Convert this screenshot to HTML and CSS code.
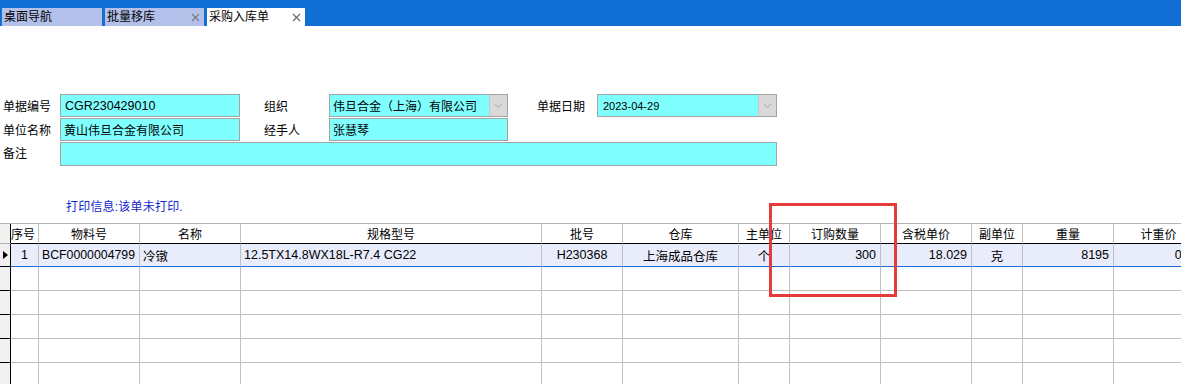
FILE: index.html
```html
<!DOCTYPE html>
<html lang="zh-CN">
<head>
<meta charset="utf-8">
<title>采购入库单</title>
<link rel="stylesheet" href="styles.css">
</head>
<body>
<div class="page">
  <div class="tabbar">
    <div class="tab">桌面导航</div>
    <div class="tab">批量移库<svg class="x" width="9" height="9" viewBox="0 0 9 9"><path d="M1 1L8 8M8 1L1 8" stroke="#7a7a7a" stroke-width="1.1" fill="none"/></svg></div>
    <div class="tab active">采购入库单<svg class="x" width="9" height="9" viewBox="0 0 9 9"><path d="M1 1L8 8M8 1L1 8" stroke="#666" stroke-width="1.1" fill="none"/></svg></div>
  </div>

  <div class="form">
    <div class="lbl">单据编号</div>
    <div class="inp lat">CGR230429010</div>
    <div class="lbl l2">组织</div>
    <div class="inp sel">伟旦合金（上海）有限公司<span class="dd"><svg width="9" height="6" viewBox="0 0 9 6"><path d="M1 1L4.5 4.5L8 1" stroke="#b8b8b8" stroke-width="1.2" fill="none"/></svg></span></div>
    <div class="lbl l3">单据日期</div>
    <div class="inp sel date">2023-04-29<span class="dd"><svg width="9" height="6" viewBox="0 0 9 6"><path d="M1 1L4.5 4.5L8 1" stroke="#b8b8b8" stroke-width="1.2" fill="none"/></svg></span></div>

    <div class="lbl">单位名称</div>
    <div class="inp">黄山伟旦合金有限公司</div>
    <div class="lbl l2">经手人</div>
    <div class="inp">张慧琴</div>
    <div class="blank"></div>
    <div class="blank"></div>

    <div class="lbl note">备注</div>
    <div class="inp wide"></div>
  </div>

  <div class="print">打印信息:该单未打印.</div>

  <div class="grid">
    <div class="row head">
      <div class="c ind"></div>
      <div class="c">序号</div>
      <div class="c">物料号</div>
      <div class="c">名称</div>
      <div class="c">规格型号</div>
      <div class="c">批号</div>
      <div class="c">仓库</div>
      <div class="c">主单位</div>
      <div class="c">订购数量</div>
      <div class="c">含税单价</div>
      <div class="c">副单位</div>
      <div class="c">重量</div>
      <div class="c">计重价</div>
    </div>
    <div class="row data sel-row">
      <div class="c ind"><svg width="6" height="8" viewBox="0 0 6 8"><path d="M1 0L6 4L1 8Z" fill="#000"/></svg></div>
      <div class="c ctr">1</div>
      <div class="c">BCF0000004799</div>
      <div class="c">冷镦</div>
      <div class="c">12.5TX14.8WX18L-R7.4 CG22</div>
      <div class="c ctr">H230368</div>
      <div class="c ctr">上海成品仓库</div>
      <div class="c ctr">个</div>
      <div class="c num">300</div>
      <div class="c num">18.029</div>
      <div class="c ctr">克</div>
      <div class="c num">8195</div>
      <div class="c num">0.00</div>
    </div>
    <div class="row empty">
      <div class="c ind"></div><div class="c"></div><div class="c"></div><div class="c"></div><div class="c"></div><div class="c"></div><div class="c"></div><div class="c"></div><div class="c"></div><div class="c"></div><div class="c"></div><div class="c"></div><div class="c"></div>
    </div>
    <div class="row empty">
      <div class="c ind"></div><div class="c"></div><div class="c"></div><div class="c"></div><div class="c"></div><div class="c"></div><div class="c"></div><div class="c"></div><div class="c"></div><div class="c"></div><div class="c"></div><div class="c"></div><div class="c"></div>
    </div>
    <div class="row empty">
      <div class="c ind"></div><div class="c"></div><div class="c"></div><div class="c"></div><div class="c"></div><div class="c"></div><div class="c"></div><div class="c"></div><div class="c"></div><div class="c"></div><div class="c"></div><div class="c"></div><div class="c"></div>
    </div>
    <div class="row empty">
      <div class="c ind"></div><div class="c"></div><div class="c"></div><div class="c"></div><div class="c"></div><div class="c"></div><div class="c"></div><div class="c"></div><div class="c"></div><div class="c"></div><div class="c"></div><div class="c"></div><div class="c"></div>
    </div>
    <div class="row empty">
      <div class="c ind"></div><div class="c"></div><div class="c"></div><div class="c"></div><div class="c"></div><div class="c"></div><div class="c"></div><div class="c"></div><div class="c"></div><div class="c"></div><div class="c"></div><div class="c"></div><div class="c"></div>
    </div>
  </div>

  <div class="mark"></div>
</div>
</body>
</html>
```

FILE: styles.css
```css
* { box-sizing: border-box; }
html, body { margin: 0; padding: 0; background: #fff; }
body {
  width: 1181px;
  height: 384px;
  overflow: hidden;
  font-family: "Liberation Sans", "Noto Sans CJK SC", sans-serif;
  font-size: 12px;
  color: #000;
}
.page { position: relative; width: 1181px; height: 384px; overflow: hidden; }

/* tabs */
.tabbar {
  height: 26px;
  background: #126fd6;
  padding: 8px 0 0 2px;
  display: flex;
  gap: 3px;
}
.tab {
  width: 99px;
  height: 18px;
  background: #b3c0ea;
  display: flex;
  align-items: center;
  justify-content: space-between;
  padding: 0 4px 0 2px;
  font-size: 12px;
  line-height: 18px;
}
.tab:first-child { width: 100px; }
.tab.active { background: #fff; width: 98px; }
.tab .x { display: block; }

/* form */
.form {
  padding-top: 68px;
  display: grid;
  grid-template-columns: 60px 180px 89px 179px 89px 180px;
  grid-template-rows: 23px 23px 24px;
  row-gap: 1px;
  width: 777px;
}
.lbl {
  padding-left: 3px;
  display: flex;
  align-items: center;
  font-size: 12px;
}
.lbl.l2 { padding-left: 24px; }
.lbl.l3 { padding-left: 29px; }
.lbl.note { align-items: flex-start; padding-top: 2px; }
.inp {
  background: #80ffff;
  border: 1px solid #a3a3a3;
  display: flex;
  align-items: center;
  padding-left: 3px;
  font-size: 12px;
  white-space: nowrap;
  overflow: hidden;
}
.inp.lat { font-size: 12.5px; padding-left: 4px; }
.inp.sel { position: relative; padding-right: 18px; }
.inp.date { font-size: 11px; padding-left: 5px; }
.inp.wide { grid-column: 2 / 7; }
.dd {
  position: absolute;
  right: 0;
  top: 0;
  bottom: 0;
  width: 18px;
  background: #d9d9d9;
  border-left: 1px solid #c8c8c8;
  display: flex;
  align-items: center;
  justify-content: center;
}

/* print info */
.print {
  margin-top: 34px;
  padding-left: 66px;
  height: 14px;
  line-height: 14px;
  color: #1428cc;
  font-size: 12px;
  letter-spacing: 0.2px;
}

/* grid */
.grid {
  margin-top: 9px;
  width: 1204px;
  border-top: 1px solid #b4b4b4;
}
.row {
  display: grid;
  grid-template-columns: 11px 28px 101px 101px 301px 81px 116px 51px 91px 91px 51px 91px 90px;
}
.c {
  border-right: 1px solid #c0c0c0;
  border-bottom: 1px solid #c0c0c0;
  display: flex;
  align-items: center;
  padding: 0 3px;
  white-space: nowrap;
  overflow: hidden;
  font-size: 12.5px;
}
.c.ctr { justify-content: center; }
.c.num { justify-content: flex-end; padding-right: 4px; }
.c.ind {
  background: #f0f0f0;
  border-right: 1px solid #000;
  border-bottom: 1px solid #000;
  padding: 0 0 0 2px;
}
.head .c {
  height: 20px;
  border-bottom: 1px solid #000;
  justify-content: center;
  font-size: 12px;
}
.head .c.ind { border-bottom: 1px solid #b4b4b4; }
.head .c:nth-child(2) { justify-content: flex-start; padding-left: 0; }
.data .c {
  height: 23px;
  background: #e9ecfb;
  border-bottom: 1px solid #1e6fce;
}
.data .c.ind { background: #f0f0f0; border-bottom: 1px solid #000; }
.data .c:nth-child(3) { padding-left: 3px; font-size: 12.3px; }
.empty .c { height: 24px; }

/* highlight annotation */
.mark {
  position: absolute;
  left: 769px;
  top: 203px;
  width: 128px;
  height: 94px;
  border: 3px solid #e63b3b;
}
```
